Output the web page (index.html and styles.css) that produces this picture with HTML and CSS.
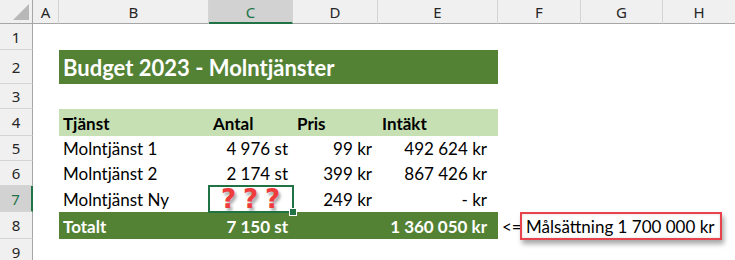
FILE: index.html
```html
<!DOCTYPE html>
<html lang="sv">
<head>
<meta charset="utf-8">
<title>Budget 2023</title>
<link rel="stylesheet" href="styles.css">
</head>
<body>
<div class="sheet">
  <div class="ch corner"><span class="tri"></span></div>
  <div class="ch">A</div>
  <div class="ch">B</div>
  <div class="ch sel">C</div>
  <div class="ch">D</div>
  <div class="ch">E</div>
  <div class="ch">F</div>
  <div class="ch">G</div>
  <div class="ch last">H</div>

  <div class="rh">1</div>
  <div class="row-empty"></div>

  <div class="rh">2</div>
  <div class="c"></div>
  <div class="title">Budget 2023 - Molntjänster</div>
  <div class="rest"></div>

  <div class="rh">3</div>
  <div class="row-empty"></div>

  <div class="rh">4</div>
  <div class="c"></div>
  <div class="c hd">Tjänst</div>
  <div class="c hd">Antal</div>
  <div class="c hd">Pris</div>
  <div class="c hd">Intäkt</div>
  <div class="rest"></div>

  <div class="rh">5</div>
  <div class="c"></div>
  <div class="c">Molntjänst 1</div>
  <div class="c num qty">4 976 st</div>
  <div class="c num price">99 kr</div>
  <div class="c num rev">492 624 kr</div>
  <div class="rest"></div>

  <div class="rh">6</div>
  <div class="c"></div>
  <div class="c">Molntjänst 2</div>
  <div class="c num qty">2 174 st</div>
  <div class="c num price">399 kr</div>
  <div class="c num rev">867 426 kr</div>
  <div class="rest"></div>

  <div class="rh sel-row">7</div>
  <div class="c"></div>
  <div class="c">Molntjänst Ny</div>
  <div class="c active"><span class="q">?</span><span class="q">?</span><span class="q">?</span><span class="handle"></span></div>
  <div class="c num price">249 kr</div>
  <div class="c num rev">- kr</div>
  <div class="rest"></div>

  <div class="rh">8</div>
  <div class="c"></div>
  <div class="c tot">Totalt</div>
  <div class="c tot num qty">7 150 st</div>
  <div class="c tot"></div>
  <div class="c tot num rev">1 360 050 kr</div>
  <div class="c goal">&lt;= Målsättning 1 700 000 kr<span class="goal-box"></span></div>

  <div class="rh">9</div>
  <div class="row-empty"></div>
</div>
</body>
</html>
```

FILE: styles.css
```css
html, body {
  margin: 0;
  padding: 0;
  background: #ffffff;
}

.sheet {
  display: grid;
  grid-template-columns: 33px 26px 150px 84px 85px 120px 83px 82px 72px;
  grid-template-rows: 24px 26px 34px 25px 27px 25px 25px 26px 27px 26px;
  width: 735px;
  height: 260px;
  overflow: hidden;
  font-family: "Lato", "Liberation Sans", sans-serif;
  font-size: 17px;
  color: #000;
}

.ch {
  box-sizing: border-box;
  background: #f0f0f0;
  border-right: 1px solid #d4d4d4;
  border-bottom: 1px solid #a6a6a6;
  display: flex;
  align-items: center;
  justify-content: center;
  font-family: "Noto Sans", "Open Sans", sans-serif;
  font-size: 15px;
  color: #262626;
  padding-top: 1px;
}

.ch.corner {
  position: relative;
  border-right: 1px solid #a6a6a6;
}

.tri {
  position: absolute;
  right: 3px;
  bottom: 3px;
  width: 0;
  height: 0;
  border-left: 16px solid transparent;
  border-bottom: 16px solid #b8b8b8;
}

.ch.sel {
  background: #d2d2d2;
  border-bottom: 2px solid #217346;
  color: #217346;
}

.ch.last {
  border-right: none;
}

.rh {
  box-sizing: border-box;
  grid-column: 1;
  background: #f0f0f0;
  border-right: 1px solid #a6a6a6;
  border-bottom: 1px solid #d4d4d4;
  display: flex;
  align-items: center;
  justify-content: center;
  font-family: "Noto Sans", "Open Sans", sans-serif;
  font-size: 15px;
  color: #262626;
}

.rh.sel-row {
  background: #d2d2d2;
  border-right: 2px solid #217346;
  color: #217346;
}

.row-empty {
  grid-column: 2 / -1;
}

.rest {
  grid-column: 7 / -1;
}

.c {
  box-sizing: border-box;
  display: flex;
  align-items: flex-end;
  padding: 0 4px 2px 4px;
  white-space: nowrap;
  min-width: 0;
}

.title {
  grid-column: 3 / 7;
  background: #548235;
  color: #ffffff;
  font-weight: 700;
  font-size: 22px;
  display: flex;
  align-items: flex-end;
  padding: 0 4px 3px 4px;
}

.hd {
  background: #c6e0b4;
  font-weight: 700;
}

.num {
  justify-content: flex-end;
}

.qty {
  padding-right: 5px;
}

.price {
  padding-right: 6px;
}

.rev {
  padding-right: 11px;
}

.tot {
  background: #548235;
  color: #ffffff;
  font-weight: 700;
}

.active {
  position: relative;
  outline: 2px solid #217346;
  outline-offset: -1px;
  justify-content: flex-start;
  align-items: center;
  padding: 0 0 0 12px;
  gap: 8px;
  z-index: 2;
}

.q {
  font-family: "DejaVu Sans", sans-serif;
  font-weight: 700;
  font-size: 26px;
  color: #ee3b3b;
  line-height: 1;
  text-shadow: 2px 3px 3px rgba(0, 0, 0, 0.35);
  width: 14px;
}

.handle {
  position: absolute;
  right: -4px;
  bottom: -4px;
  width: 6px;
  height: 6px;
  background: #217346;
  border: 1px solid #ffffff;
}

.goal {
  grid-column: 7 / -1;
  position: relative;
  overflow: visible;
}

.goal-box {
  position: absolute;
  left: 22px;
  top: 0;
  width: 202px;
  height: 28px;
  box-sizing: border-box;
  border: 2px solid #e8424c;
  box-shadow: 2px 4px 5px rgba(0, 0, 0, 0.35), inset 0 0 3px rgba(0, 0, 0, 0.15);
}
```
